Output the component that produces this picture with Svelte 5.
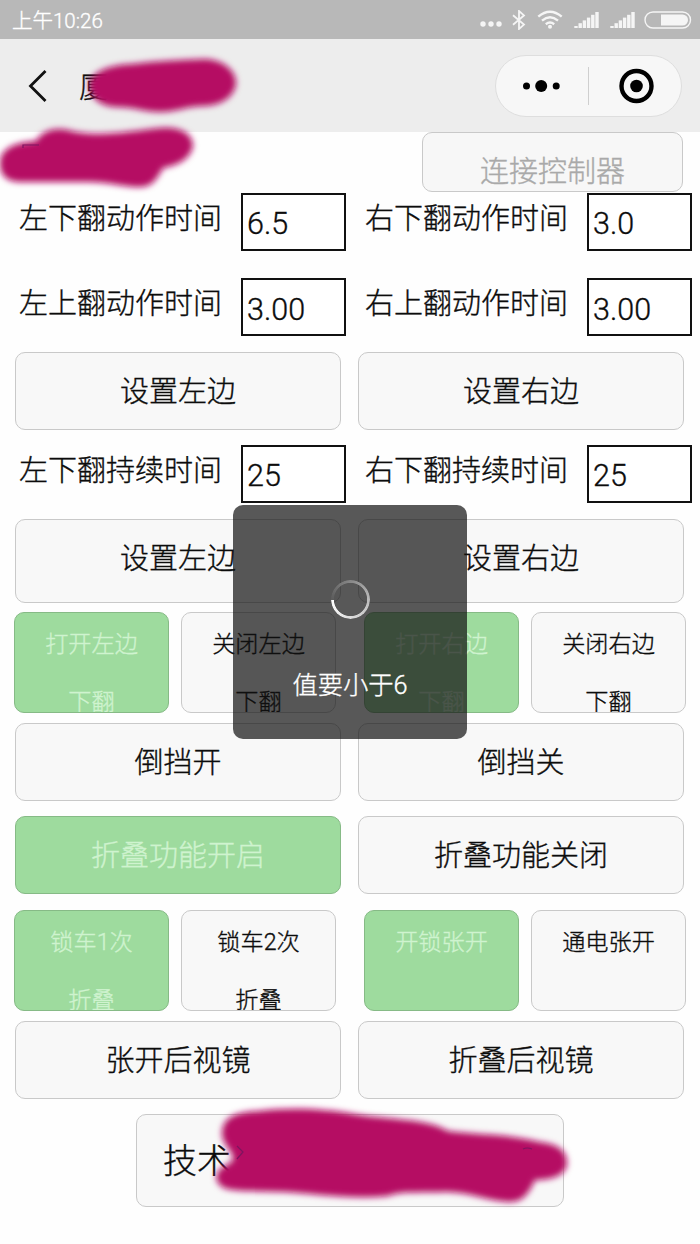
<script lang="ts">
	type Field = { label: string; value: string };
	type Option = { lines: string[]; on?: boolean };

	let actionTimes: Field[] = [
		{ label: '左下翻动作时间', value: '6.5' },
		{ label: '右下翻动作时间', value: '3.0' },
		{ label: '左上翻动作时间', value: '3.00' },
		{ label: '右上翻动作时间', value: '3.00' }
	];
	let holdTimes: Field[] = [
		{ label: '左下翻持续时间', value: '25' },
		{ label: '右下翻持续时间', value: '25' }
	];
	let flipOptions: Option[] = [
		{ lines: ['打开左边', '下翻'], on: true },
		{ lines: ['关闭左边', '下翻'] },
		{ lines: ['打开右边', '下翻'], on: true },
		{ lines: ['关闭右边', '下翻'] }
	];
	let foldOptions: Option[] = [
		{ lines: ['锁车1次', '折叠'], on: true },
		{ lines: ['锁车2次', '折叠'] },
		{ lines: ['开锁张开'], on: true },
		{ lines: ['通电张开'] }
	];
	let toast = '值要小于6';
	const bars = [0, 1, 2, 3, 4, 5];
</script>

{#snippet fields(list: Field[])}
	<div class="fields">
		{#each list as f}
			<label class="field">
				<span>{f.label}</span>
				<input type="text" value={f.value} />
			</label>
		{/each}
	</div>
{/snippet}

{#snippet options(list: Option[])}
	<div class="options">
		{#each list as o}
			<button class="option" class:on={o.on}>
				{#each o.lines as line}<span>{line}</span>{/each}
			</button>
		{/each}
	</div>
{/snippet}

{#snippet signal()}
	<svg class="signal" width="25" height="18" viewBox="0 0 25 18">
		{#each bars as i}
			<rect x={i * 4.2 + 0.3} y={15 - i * 2.8} width="3.4" height={2 + i * 2.8} />
		{/each}
	</svg>
{/snippet}

<div class="screen">
	<header class="status">
		<span class="clock">上午10:26</span>
		<div class="icons">
			<svg class="more" width="22" height="6" viewBox="0 0 22 6">
				<circle cx="3" cy="3" r="2.7" />
				<circle cx="11" cy="3" r="2.7" />
				<circle cx="19" cy="3" r="2.7" />
			</svg>
			<svg class="bluetooth" width="14" height="20" viewBox="0 0 14 20">
				<path d="M1 5.2 12 14.6 7 19V1l5 4.4L1 14.8" />
			</svg>
			<svg class="wifi" width="26" height="19" viewBox="0 0 26 19">
				<path d="M1.3 6.7Q13-3.2 24.7 6.7M5 10.6Q13 4 21 10.6M8.8 14.2Q13 10.8 17.2 14.2" />
				<circle cx="13" cy="16.7" r="2" />
			</svg>
			{@render signal()}
			{@render signal()}
			<svg class="battery" width="48" height="18" viewBox="0 0 48 18">
				<rect x="1" y="1" width="45.5" height="16" rx="8" />
				<path d="M17 3.5H38.5a5.5 5.5 0 0 1 0 11H17z" />
			</svg>
		</div>
	</header>

	<nav class="nav">
		<svg class="back" width="20" height="34" viewBox="0 0 20 34">
			<path d="M17.5 2 2.5 17 17.5 32" />
		</svg>
		<h1>厦</h1>
		<div class="capsule">
			<svg width="40" height="16" viewBox="0 0 40 16">
				<circle cx="4.5" cy="8" r="3.5" />
				<circle cx="19.2" cy="8" r="6" />
				<circle cx="34.2" cy="8" r="3.5" />
			</svg>
			<i></i>
			<svg width="36" height="36" viewBox="0 0 36 36">
				<circle class="ring" cx="18.5" cy="18" r="15" />
				<circle cx="18.5" cy="18" r="6.3" />
			</svg>
		</div>
	</nav>

	<main>
		<div class="top">
			<button class="connect" disabled>连接控制器</button>
		</div>

		{@render fields(actionTimes)}
		<div class="pair after-fields">
			<button>设置左边</button>
			<button>设置右边</button>
		</div>

		{@render fields(holdTimes)}
		<div class="pair after-fields tall">
			<button>设置左边</button>
			<button>设置右边</button>
		</div>

		{@render options(flipOptions)}
		<div class="pair">
			<button>倒挡开</button>
			<button>倒挡关</button>
		</div>
		<div class="pair fold">
			<button class="on">折叠功能开启</button>
			<button>折叠功能关闭</button>
		</div>

		{@render options(foldOptions)}
		<div class="pair">
			<button>张开后视镜</button>
			<button>折叠后视镜</button>
		</div>

		<button class="support">技术</button>
	</main>

	<!-- brush marks over the private names -->
	<svg class="marks" width="700" height="1244" viewBox="0 0 700 1244">
		<defs>
			<filter id="soft" x="-10%" y="-20%" width="120%" height="140%">
				<feGaussianBlur stdDeviation="3" />
			</filter>
		</defs>
		<g filter="url(#soft)">
			<path d="M89 84C92 71 110 65 132 64C156 61 180 60 205 59C224 60 236 71 236 83C235 96 222 106 202 106C184 107 176 112 160 112C145 112 134 107 116 107C100 106 90 98 89 84Z" />
			<path d="M0 162C1 149 14 142 36 141C42 131 54 127 68 130C94 138 130 131 160 128C179 126 193 133 193 146C191 158 179 165 163 168C157 179 152 187 140 187C122 187 106 181 82 182H18C6 181-1 174 0 162Z" />
			<path d="M222 1134C222 1117 236 1112 258 1111C290 1107 326 1109 354 1114C388 1120 426 1118 448 1131C478 1135 510 1134 540 1142C558 1144 567 1151 567 1163C567 1174 554 1180 535 1180C529 1193 523 1202 510 1202C486 1201 472 1192 444 1192C416 1193 401 1191 388 1196C350 1200 311 1193 284 1192C261 1191 235 1192 224 1188C213 1182 214 1171 226 1165C244 1158 222 1148 222 1134Z" />
		</g>
		<path class="trace" d="M23 148v-3h16M237 1146l6 6-6 7M523 1149q4-2 9 0" />
	</svg>

	<div class="toast">
		<div class="spinner"></div>
		<p>{toast}</p>
	</div>
</div>

<style>
	:global(body) {
		margin: 0;
		background: #fff;
	}
	.screen {
		position: relative;
		width: 700px;
		height: 1244px;
		overflow: hidden;
		background: #fefefe;
		color: #0c0c0c;
		font-family: Roboto, 'Noto Sans CJK SC', sans-serif;
		font-weight: 300;
		-webkit-text-stroke: 0.35px currentColor;
	}
	.status {
		display: flex;
		justify-content: space-between;
		align-items: center;
		box-sizing: border-box;
		height: 39px;
		padding: 0 8px 0 12px;
		background: #b8b8b8;
		color: #fff;
		font-size: 20.5px;
	}
	.clock {
		padding-top: 3px;
		line-height: 36px;
	}
	.icons {
		display: flex;
		align-items: center;
		fill: #f5f5f5;
	}
	.more {
		margin: 9px 10px 0 0;
	}
	.bluetooth {
		margin-right: 11px;
		fill: none;
		stroke: #f5f5f5;
		stroke-width: 1.8;
	}
	.wifi {
		margin-right: 11px;
	}
	.wifi path {
		fill: none;
		stroke: #f5f5f5;
		stroke-width: 2.4;
	}
	.signal {
		margin-right: 10.5px;
	}
	.battery {
		margin-left: -1px;
	}
	.battery rect {
		fill: none;
		stroke: #f5f5f5;
		stroke-width: 1.4;
	}
	.nav {
		display: flex;
		align-items: center;
		box-sizing: border-box;
		height: 93px;
		padding: 0 18px 0 28px;
		background: #ededed;
	}
	.back path {
		fill: none;
		stroke: #111;
		stroke-width: 2.8;
	}
	h1 {
		flex: 1;
		margin: 0 0 0 31px;
		padding-top: 4px;
		font-size: 29px;
		font-weight: 300;
		line-height: 40px;
	}
	.capsule {
		display: flex;
		align-items: center;
		box-sizing: border-box;
		width: 187px;
		height: 62px;
		padding: 0 27px 0 26px;
		justify-content: space-between;
		border: 1.5px solid #dedede;
		border-radius: 31px;
		background: #f7f7f7;
	}
	.capsule i {
		width: 1px;
		height: 38px;
		margin-left: -4px;
		background: #cfcfcf;
	}
	.ring {
		fill: none;
		stroke: #000;
		stroke-width: 4.4;
	}
	button {
		display: block;
		box-sizing: border-box;
		margin: 0;
		padding: 0 0 3px;
		overflow: hidden;
		border: 1px solid #c9c9c9;
		border-radius: 10px;
		background: #f8f8f8;
		color: #0c0c0c;
		font: inherit;
		font-size: 29px;
		-webkit-text-stroke: inherit;
		-webkit-text-stroke-color: currentColor;
	}
	button.on {
		border-color: #86ba86;
		background: #9edb9e;
		color: #cff3cf;
	}
	.top {
		display: flex;
		justify-content: flex-end;
		height: 60.5px;
		padding-right: 17px;
	}
	.connect {
		width: 261px;
		height: 60px;
		padding-top: 15px;
		background: #f7f7f7;
		color: #a9a9a9;
	}
	.fields {
		display: grid;
		grid-template-columns: 346px 346px;
		row-gap: 27px;
	}
	.field {
		display: flex;
		justify-content: space-between;
		height: 58.5px;
		padding-left: 19px;
		font-size: 29px;
	}
	.field span {
		line-height: 53px;
	}
	input {
		box-sizing: border-box;
		width: 105px;
		height: 58px;
		padding: 4px 0 0 4px;
		border: 2px solid #111;
		border-radius: 0;
		background: #fff;
		color: #0c0c0c;
		font: inherit;
		font-size: 30.5px;
	}
	.pair {
		display: grid;
		grid-template-columns: 1fr 1fr;
		column-gap: 17px;
		height: 78px;
		margin: 10px 16px 15px 15px;
	}
	.pair.after-fields {
		margin-top: 15px;
	}
	.pair.tall {
		height: 84px;
		margin-top: 15.5px;
		margin-bottom: 9px;
	}
	.tall button {
		padding-bottom: 9px;
	}
	.pair.fold {
		margin-bottom: 16px;
	}
	.options {
		display: grid;
		grid-template-columns: 155px 155px 155px 155px;
		column-gap: 12px;
		height: 101px;
		padding-left: 14px;
	}
	.option {
		display: flex;
		flex-direction: column;
		align-items: center;
		justify-content: flex-start;
		padding-top: 2px;
		line-height: 58px;
		font-size: 23.2px;
	}
	.option:nth-child(n + 3) {
		transform: translateX(16px);
	}
	.option span {
		flex: none;
		height: 58px;
	}
	.support {
		width: 428px;
		height: 93px;
		margin: 0 auto;
		padding-left: 26px;
		text-align: left;
		font-size: 34px;
	}
	.marks {
		position: absolute;
		inset: 0;
		fill: #b50d63;
		pointer-events: none;
	}
	.trace {
		fill: none;
		stroke: #7d1560;
		stroke-width: 1.2;
	}
	.toast {
		position: absolute;
		top: 505px;
		left: 233px;
		display: flex;
		flex-direction: column;
		align-items: center;
		width: 234px;
		height: 234px;
		border-radius: 10px;
		background: rgba(17, 17, 17, 0.7);
		color: #fff;
	}
	.spinner {
		width: 39px;
		height: 39px;
		margin-top: 75px;
		border-radius: 50%;
		background: conic-gradient(from -90deg, #5c5c5c, #888 25%, #bbb 50%, #ddd 75%, #fff);
		mask: radial-gradient(circle, transparent 16.2px, #000 17px);
	}
	.toast p {
		margin: 44px 0 0;
		font-size: 25.3px;
		line-height: 46px;
	}
</style>
